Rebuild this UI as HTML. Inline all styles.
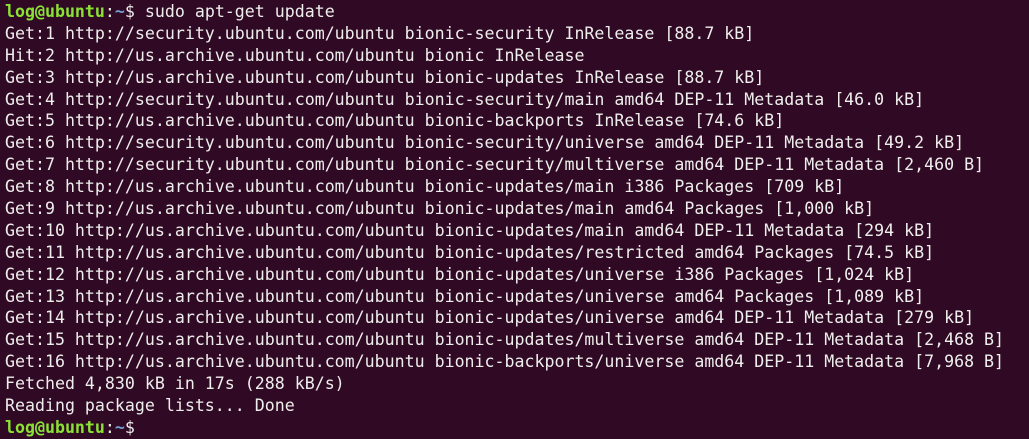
<!DOCTYPE html>
<html><head><meta charset="utf-8"><style>
html,body{margin:0;padding:0;background:#300a24;width:1029px;height:439px;overflow:hidden}
.t{padding:1px 0 0 5px;font-family:"DejaVu Sans Mono","Liberation Mono",monospace;font-size:16.6px;color:#eeeeec}
.t div{height:21.9px;line-height:21.9px;white-space:pre}
.g{color:#8ae234;font-weight:bold}.b{color:#729fcf;font-weight:bold}
</style></head><body><div class="t"><div><span class="g">log@ubuntu</span>:<span class="b">~</span>$ sudo apt-get update</div><div>Get:1 http://security.ubuntu.com/ubuntu bionic-security InRelease [88.7 kB]</div><div>Hit:2 http://us.archive.ubuntu.com/ubuntu bionic InRelease</div><div>Get:3 http://us.archive.ubuntu.com/ubuntu bionic-updates InRelease [88.7 kB]</div><div>Get:4 http://security.ubuntu.com/ubuntu bionic-security/main amd64 DEP-11 Metadata [46.0 kB]</div><div>Get:5 http://us.archive.ubuntu.com/ubuntu bionic-backports InRelease [74.6 kB]</div><div>Get:6 http://security.ubuntu.com/ubuntu bionic-security/universe amd64 DEP-11 Metadata [49.2 kB]</div><div>Get:7 http://security.ubuntu.com/ubuntu bionic-security/multiverse amd64 DEP-11 Metadata [2,460 B]</div><div>Get:8 http://us.archive.ubuntu.com/ubuntu bionic-updates/main i386 Packages [709 kB]</div><div>Get:9 http://us.archive.ubuntu.com/ubuntu bionic-updates/main amd64 Packages [1,000 kB]</div><div>Get:10 http://us.archive.ubuntu.com/ubuntu bionic-updates/main amd64 DEP-11 Metadata [294 kB]</div><div>Get:11 http://us.archive.ubuntu.com/ubuntu bionic-updates/restricted amd64 Packages [74.5 kB]</div><div>Get:12 http://us.archive.ubuntu.com/ubuntu bionic-updates/universe i386 Packages [1,024 kB]</div><div>Get:13 http://us.archive.ubuntu.com/ubuntu bionic-updates/universe amd64 Packages [1,089 kB]</div><div>Get:14 http://us.archive.ubuntu.com/ubuntu bionic-updates/universe amd64 DEP-11 Metadata [279 kB]</div><div>Get:15 http://us.archive.ubuntu.com/ubuntu bionic-updates/multiverse amd64 DEP-11 Metadata [2,468 B]</div><div>Get:16 http://us.archive.ubuntu.com/ubuntu bionic-backports/universe amd64 DEP-11 Metadata [7,968 B]</div><div>Fetched 4,830 kB in 17s (288 kB/s)</div><div>Reading package lists... Done</div><div><span class="g">log@ubuntu</span>:<span class="b">~</span>$ </div></div></body></html>
